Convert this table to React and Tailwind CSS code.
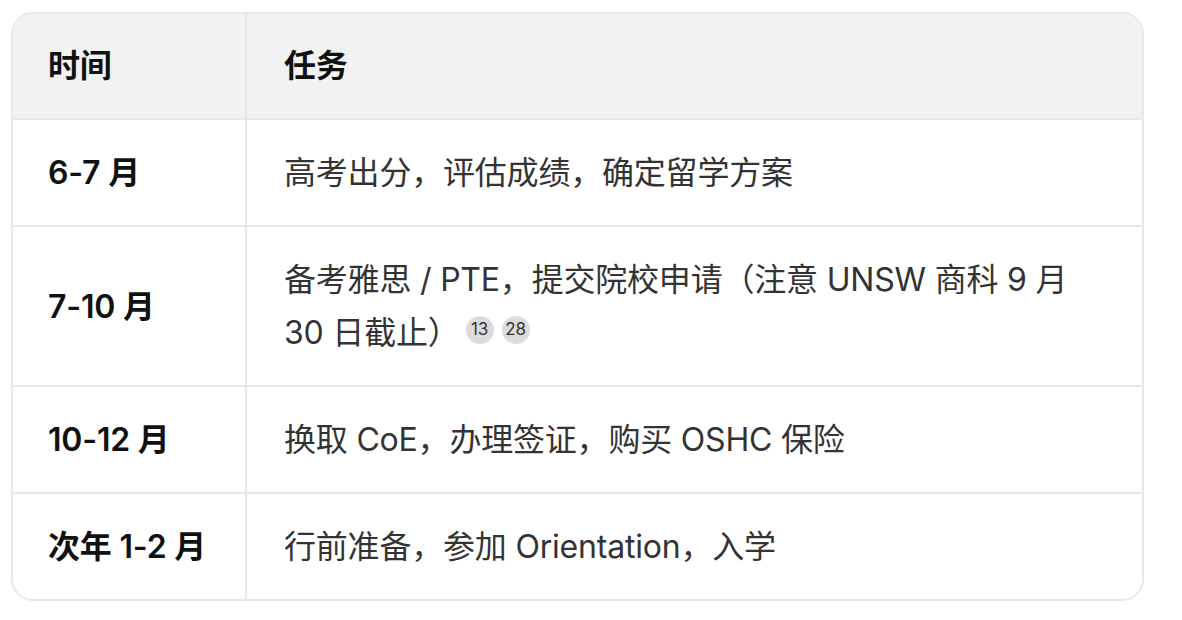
import React from 'react';

const rows = [
    { time: '6-7 月', task: <>高考出分，评估成绩，确定留学方案</> },
    {
        time: '7-10 月',
        task: (
            <>
                备考雅思 / PTE，提交院校申请（注意 UNSW 商科 9 月<br />
                30 日截止）
                <span className="inline-flex items-center gap-[8px] ml-[6px] align-[9px]">
                    <Cite n="13" />
                    <Cite n="28" />
                </span>
            </>
        ),
    },
    { time: '10-12 月', task: <>换取 CoE，办理签证，购买 OSHC 保险</> },
    { time: '次年 1-2 月', task: <>行前准备，参加 Orientation，入学</> },
];

function Cite({ n }) {
    return (
        <span className="inline-flex shrink-0 items-center justify-center w-[28px] h-[28px] rounded-full bg-[#dcdcdc] text-[17px] leading-none text-[#333]">
            {n}
        </span>
    );
}

export default function App() {
    return (
        <div
            className="w-[1182px] h-[620px] bg-white pt-[12px] pl-[11px]"
            style={{ fontFamily: 'Inter, "Noto Sans CJK SC", sans-serif' }}
        >
            <div className="w-[1133px] rounded-[22px] border-2 border-[#e8e8e8] overflow-hidden">
                <table className="w-full border-collapse text-[32px] leading-[53px] tracking-[-0.2px]">
                    <thead>
                        <tr className="bg-[#f2f2f2]">
                            <th className="w-[233px] text-left font-semibold text-[#111] pl-[35px] pt-[25px] pb-[26px] border-r-2 border-[#e3e3e3]">时间</th>
                            <th className="text-left font-semibold text-[#111] pl-[37px] pt-[25px] pb-[26px]">任务</th>
                        </tr>
                    </thead>
                    <tbody>
                        {rows.map((r, i) => (
                            <tr key={i} className="border-t-2 border-[#e8e8e8]">
                                <td className="w-[233px] pl-[35px] py-[26px] font-semibold text-[#111] border-r-2 border-[#e8e8e8] align-middle">{r.time}</td>
                                <td className="pl-[37px] pr-[20px] py-[26px] text-[#333] align-middle">{r.task}</td>
                            </tr>
                        ))}
                    </tbody>
                </table>
            </div>
        </div>
    );
}
